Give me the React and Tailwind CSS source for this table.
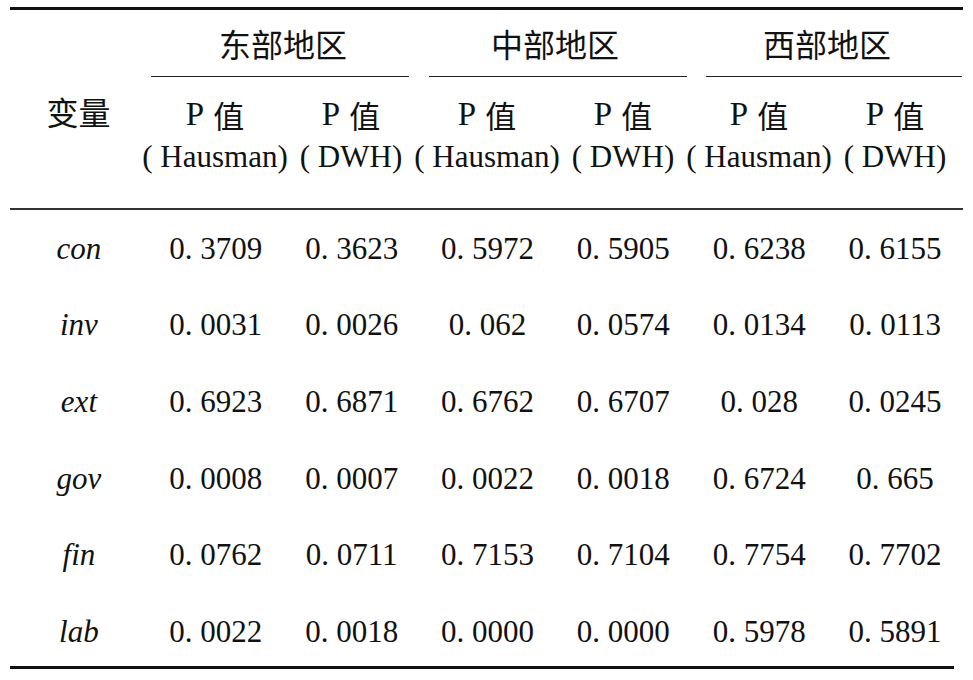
import React from 'react';

const groups = ['东部地区', '中部地区', '西部地区'];

const rows = [
    { name: 'con', values: ['0. 3709', '0. 3623', '0. 5972', '0. 5905', '0. 6238', '0. 6155'] },
    { name: 'inv', values: ['0. 0031', '0. 0026', '0. 062', '0. 0574', '0. 0134', '0. 0113'] },
    { name: 'ext', values: ['0. 6923', '0. 6871', '0. 6762', '0. 6707', '0. 028', '0. 0245'] },
    { name: 'gov', values: ['0. 0008', '0. 0007', '0. 0022', '0. 0018', '0. 6724', '0. 665'] },
    { name: 'fin', values: ['0. 0762', '0. 0711', '0. 7153', '0. 7104', '0. 7754', '0. 7702'] },
    { name: 'lab', values: ['0. 0022', '0. 0018', '0. 0000', '0. 0000', '0. 5978', '0. 5891'] },
];

// underline segments under the region headers
const lines = ['ml-[4px] mr-[10px]', 'ml-[10px] mr-[4px]', 'ml-[15px] mr-[1px]'];

const PCell = ({ test }) => (
    <div className="w-[136px] flex flex-col items-center pt-[20px]">
        <div className="h-[34px] flex items-center whitespace-nowrap text-[33px] leading-none">
            <span className="font-[family-name:Liberation_Serif,serif]">P</span>
            <span className="font-[family-name:Noto_Sans_CJK_SC,sans-serif] ml-[9px] text-[31px]">值</span>
        </div>
        <div className="font-[family-name:Liberation_Serif,serif] mt-[8px] h-[34px] flex items-center justify-center whitespace-nowrap text-[31px] leading-none">
            ( {test})
        </div>
    </div>
);

export default function App() {
    return (
        <div className="w-[973px] h-[680px] bg-white text-[#111]">
            <div className="ml-[10px] w-[953px] pt-[7px]">
                <div className="h-[3px] bg-[#111]" />

                <div className="flex">
                    <div className="font-[family-name:Noto_Sans_CJK_SC,sans-serif] w-[138px] flex items-center justify-center pt-[4px] text-[32px] leading-none">
                        变量
                    </div>
                    <div className="flex flex-col">
                        <div className="flex h-[66px]">
                            {groups.map((g) => (
                                <div key={g} className="font-[family-name:Noto_Sans_CJK_SC,sans-serif] w-[272px] flex items-center justify-center text-[32px] leading-none">
                                    {g}
                                </div>
                            ))}
                        </div>
                        <div className="flex h-[1px]">
                            {lines.map((m, i) => (
                                <div key={i} className="w-[272px] flex">
                                    <div className={`flex-1 bg-[#222] ${m}`} />
                                </div>
                            ))}
                        </div>
                        <div className="flex h-[131px]">
                            {groups.map((g) => (
                                <React.Fragment key={g}>
                                    <PCell test="Hausman" />
                                    <PCell test="DWH" />
                                </React.Fragment>
                            ))}
                        </div>
                    </div>
                </div>

                <div className="h-[2px] bg-[#333]" />

                <div className="flex flex-col font-[family-name:Liberation_Serif,serif]">
                    {rows.map((r) => (
                        <div key={r.name} className="flex h-[76.6px] items-center">
                            <div className="w-[138px] text-center italic text-[31px] leading-none">{r.name}</div>
                            {r.values.map((v, i) => (
                                <div key={i} className="w-[136px] text-center whitespace-pre text-[31px] leading-none">
                                    {v}
                                </div>
                            ))}
                        </div>
                    ))}
                </div>

                <div className="-mt-[4px] h-[3px] w-[944px] bg-[#111]" />
            </div>
        </div>
    );
}
